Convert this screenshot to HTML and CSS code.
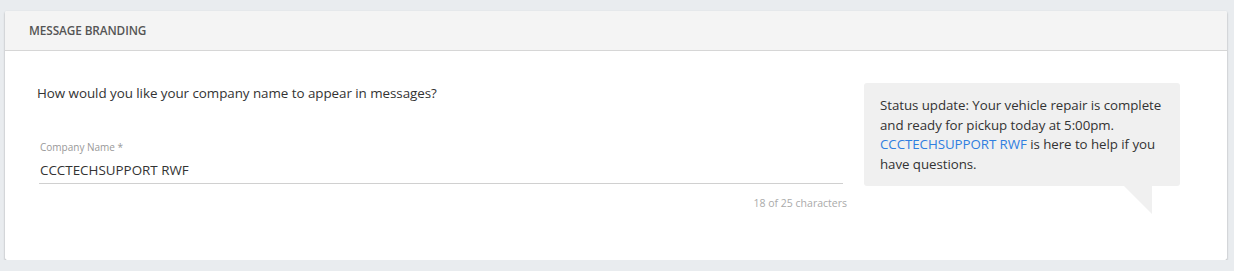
FILE: index.html
```html
<!DOCTYPE html>
<html lang="en">
<head>
<meta charset="utf-8">
<title>Message Branding</title>
<link rel="stylesheet" href="styles.css">
</head>
<body>
<section class="card">
  <header class="card-header">Message Branding</header>
  <div class="card-body">
    <div class="form-col">
      <p class="question">How would you like your company name to appear in messages?</p>
      <div class="field">
        <label class="field-label" for="company">Company Name *</label>
        <input class="field-input" id="company" type="text" value="CCCTECHSUPPORT RWF">
      </div>
      <div class="counter">18 of 25 characters</div>
    </div>
    <div class="preview-col">
      <div class="bubble">
        Status update: Your vehicle repair is complete and ready for pickup today at 5:00pm. <span class="brand">CCCTECHSUPPORT RWF</span> is here to help if you have questions.
      </div>
    </div>
  </div>
</section>
</body>
</html>
```
FILE: styles.css
```css
html, body {
  margin: 0;
  padding: 0;
}
body {
  background: #e9ecef;
  font-family: "Segoe UI", "Open Sans", "Noto Sans", sans-serif;
  color: #333;
  padding: 11px 7px 0 5px;
}
.card {
  background: #fff;
  height: 249px;
  border-radius: 2px;
  box-shadow: 0 1px 2px rgba(0, 0, 0, 0.35);
  overflow: hidden;
}
.card-header {
  height: 40px;
  box-sizing: border-box;
  background: #f4f4f4;
  border-bottom: 1px solid #d6d6d6;
  padding: 0 24px 1px 24px;
  display: flex;
  align-items: center;
  font-size: 11.8px;
  font-weight: 600;
  text-transform: uppercase;
  color: #555;
  letter-spacing: -0.1px;
}
.card-body {
  display: flex;
  padding: 32px 47px 0 32px;
  gap: 17px;
}
.form-col {
  width: 810px;
  flex: none;
}
.question {
  margin: 0;
  font-size: 13.4px;
  line-height: 18px;
  padding-top: 1px;
  color: #333;
  letter-spacing: -0.05px;
}
.field {
  margin-top: 38px;
  margin-left: 2px;
  display: flex;
  flex-direction: column;
}
.field-label {
  font-size: 10px;
  line-height: 14px;
  color: #999;
  padding-left: 1px;
}
.field-input {
  border: 0;
  border-bottom: 1px solid #d0d0d0;
  outline: none;
  padding: 7px 0 4px 1px;
  margin: 0;
  font-family: inherit;
  font-size: 13.4px;
  line-height: 18px;
  color: #333;
  background: transparent;
  width: 803px;
}
.counter {
  text-align: right;
  font-size: 10.5px;
  color: #aaa;
  margin-top: 12px;
  line-height: 14px;
}
.preview-col {
  flex: 1;
}
.bubble {
  position: relative;
  background: #f0f0f0;
  border-radius: 3px;
  padding: 13px 16px 12px 16px;
  font-size: 13.3px;
  line-height: 19.5px;
  color: #333;
  letter-spacing: -0.05px;
}
.bubble::after {
  content: "";
  position: absolute;
  right: 28px;
  bottom: -28px;
  width: 0;
  height: 0;
  border-top: 28px solid #f0f0f0;
  border-left: 28px solid transparent;
}
.brand {
  color: #2f7ee0;
}
```
